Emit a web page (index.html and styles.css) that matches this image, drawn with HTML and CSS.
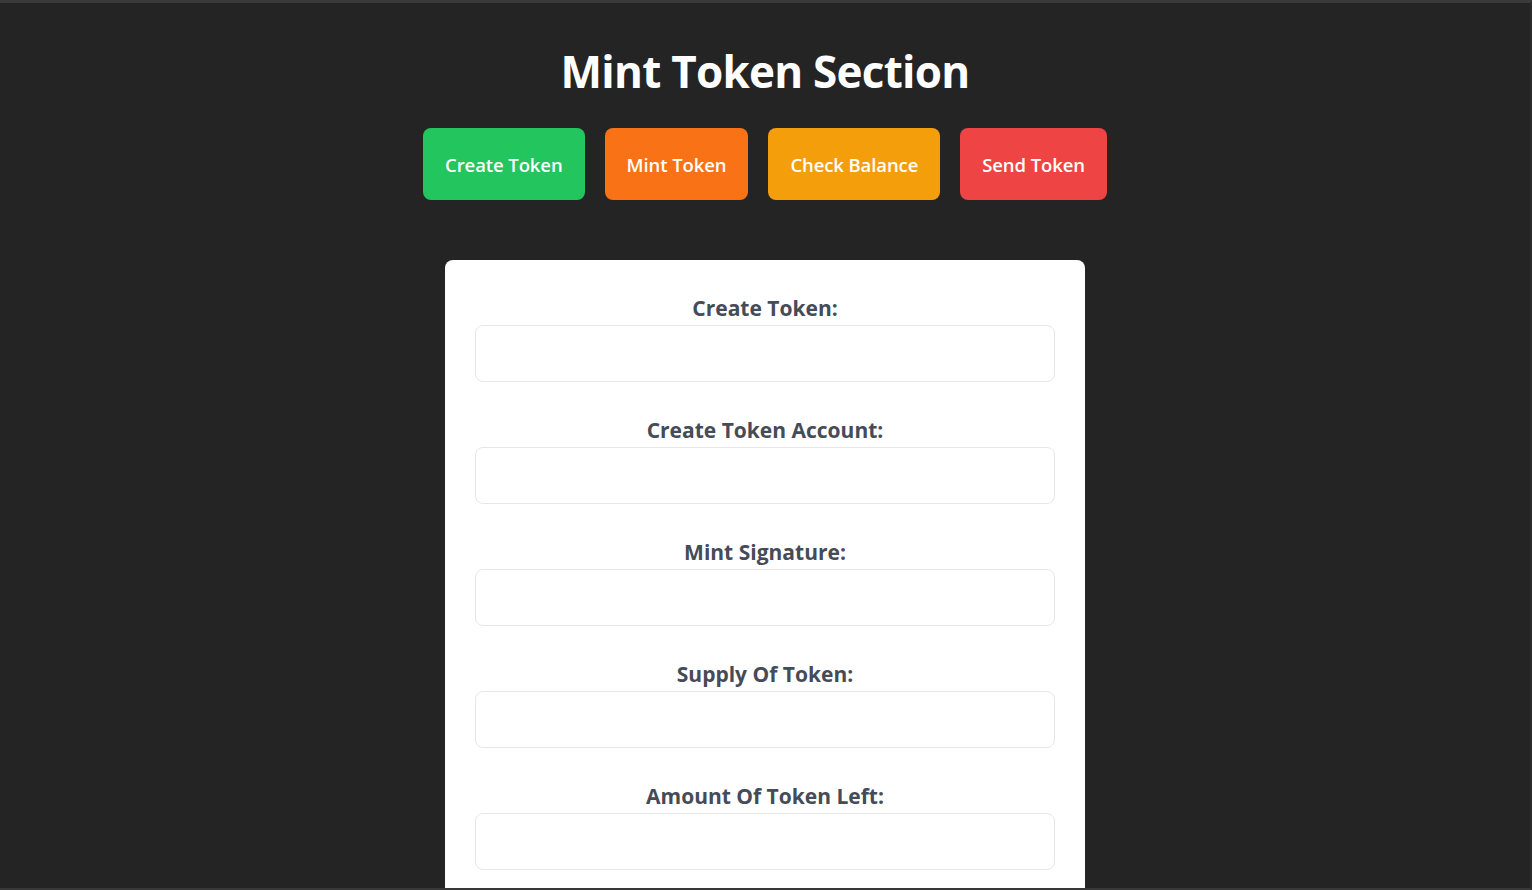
FILE: index.html
```html
<!DOCTYPE html>
<html>
<head>
<meta charset="utf-8">
<link rel="stylesheet" href="styles.css">
</head>
<body>
<main class="page">
  <h1 class="title">Mint Token Section</h1>
  <div class="actions">
    <button class="btn btn-green">Create Token</button>
    <button class="btn btn-orange">Mint Token</button>
    <button class="btn btn-amber">Check Balance</button>
    <button class="btn btn-red">Send Token</button>
  </div>
  <section class="card">
    <div class="field">
      <label class="label">Create Token:</label>
      <input class="input" type="text">
    </div>
    <div class="field">
      <label class="label">Create Token Account:</label>
      <input class="input" type="text">
    </div>
    <div class="field">
      <label class="label">Mint Signature:</label>
      <input class="input" type="text">
    </div>
    <div class="field">
      <label class="label">Supply Of Token:</label>
      <input class="input" type="text">
    </div>
    <div class="field">
      <label class="label">Amount Of Token Left:</label>
      <input class="input" type="text">
    </div>
  </section>
</main>
</body>
</html>
```

FILE: styles.css
```css
html, body {
  margin: 0;
  padding: 0;
  height: 100%;
  overflow: hidden;
}
body {
  background: #242424;
  border-top: 3px solid #3a3a3a;
  border-right: 2px solid #2c2c2c;
  border-bottom: 2px solid #383838;
  box-sizing: border-box;
  font-family: "Open Sans", "Noto Sans", sans-serif;
}
.page {
  display: flex;
  flex-direction: column;
  align-items: center;
  height: 100%;
  overflow: hidden;
}
.title {
  margin: 40px 0 0;
  color: #ffffff;
  font-size: 44px;
  line-height: 56px;
  font-weight: 700;
  letter-spacing: -0.75px;
}
.actions {
  display: flex;
  gap: 20px;
  margin-top: 29px;
}
.btn {
  border: none;
  border-radius: 8px;
  height: 72px;
  padding: 1px 22px 0;
  color: #ffffff;
  font-family: inherit;
  font-size: 18.5px;
  font-weight: 600;
  letter-spacing: -0.1px;
  cursor: pointer;
}
.btn-green { background: #22c55e; }
.btn-orange { background: #f97316; }
.btn-amber { background: #f59e0b; }
.btn-red { background: #ef4444; }
.card {
  margin-top: 60px;
  width: 640px;
  flex-shrink: 0;
  box-sizing: border-box;
  background: #ffffff;
  border-radius: 8px;
  padding: 34px 30px 30px;
  display: flex;
  flex-direction: column;
  gap: 34px;
}
.field {
  display: flex;
  flex-direction: column;
  align-items: center;
  gap: 3px;
}
.label {
  color: #454b57;
  font-size: 21px;
  line-height: 28px;
  font-weight: 700;
}
.input {
  width: 100%;
  box-sizing: border-box;
  height: 57px;
  border: 1px solid #e5e7eb;
  border-radius: 8px;
  outline: none;
  background: #ffffff;
}
```
